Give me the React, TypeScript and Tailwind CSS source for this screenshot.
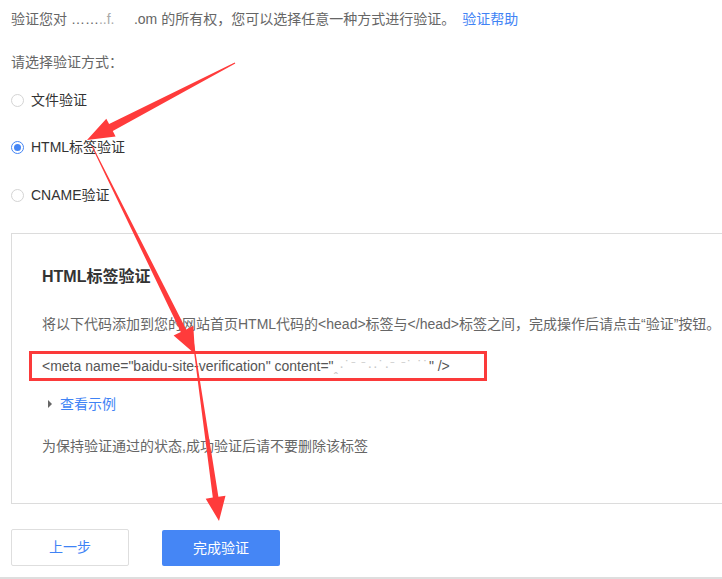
import React from "react";

type Pt = [number, number];

// tapered arrow polygon from tail to tip
function arrowPoints(tail: Pt, tip: Pt, headLen: number, headW: number, shaftW: number, tailW: number) {
  const dx = tip[0] - tail[0];
  const dy = tip[1] - tail[1];
  const len = Math.hypot(dx, dy);
  const ux = dx / len;
  const uy = dy / len;
  const nx = -uy;
  const ny = ux;
  const bx = tip[0] - ux * headLen;
  const by = tip[1] - uy * headLen;
  const p = (x: number, y: number) => `${x.toFixed(1)},${y.toFixed(1)}`;
  return [
    p(tail[0] + nx * tailW, tail[1] + ny * tailW),
    p(bx + nx * shaftW, by + ny * shaftW),
    p(bx + nx * headW, by + ny * headW),
    p(tip[0], tip[1]),
    p(bx - nx * headW, by - ny * headW),
    p(bx - nx * shaftW, by - ny * shaftW),
    p(tail[0] - nx * tailW, tail[1] - ny * tailW),
  ].join(" ");
}

function Radio({ checked, label }: { checked?: boolean; label: string }) {
  return (
    <div className="flex items-center h-[28px] gap-[7px]">
      <span
        className={`w-[13px] h-[13px] rounded-full border flex items-center justify-center bg-white ${
          checked ? "border-[#4586f5]" : "border-[#d4d4d4]"
        }`}
      >
        {checked && <span className="w-[7px] h-[7px] rounded-full bg-[#4586f5]" />}
      </span>
      <span className="text-[14px] text-[#333]">{label}</span>
    </div>
  );
}

export default function App() {
  return (
    <div
      className="relative w-[722px] h-[579px] overflow-hidden bg-white"
      style={{ fontFamily: '"Liberation Sans", "Noto Sans CJK SC", sans-serif' }}
    >
      <div className="flex flex-col">
        <div className="h-[38px] flex items-center pl-[11px] text-[14px] text-[#666] whitespace-nowrap">
          <span>
            验证您对 ……<span className="text-[#aaa]">..f.</span>&nbsp;&nbsp;&nbsp;&nbsp;&nbsp;.om 的所有权，您可以选择任意一种方式进行验证。
          </span>
          <a className="ml-[7px] text-[#3f83f5]">验证帮助</a>
        </div>
        <div className="h-[48px] flex items-center pl-[11px] text-[14px] text-[#666]">请选择验证方式：</div>

        <div className="pl-[11px] flex flex-col">
          <Radio label="文件验证" />
          <div className="mt-[19px]">
            <Radio checked label="HTML标签验证" />
          </div>
          <div className="mt-[20px]">
            <Radio label="CNAME验证" />
          </div>
        </div>

        <div className="mt-[24px] ml-[11px] w-[740px] border border-[#dcdcdc] pl-[30px] pt-[31px] pb-[47px]">
          <div className="h-[24px] flex items-center text-[16px] font-bold text-[#333]">HTML标签验证</div>
          <div className="mt-[25px] h-[20px] flex items-center text-[14px] text-[#666] whitespace-nowrap">
            将以下代码添加到您的网站首页HTML代码的&lt;head&gt;标签与&lt;/head&gt;标签之间，完成操作后请点击“验证”按钮。
          </div>
          <div className="mt-[17px] -ml-[13px] w-[458px] h-[30px] border-[3px] border-[#fb3a3a] flex items-center pl-[10px] text-[14px] text-[#555] whitespace-nowrap">
            &lt;meta name="baidu-site-verification" content="
            <span className="text-[#c8c8c8] tracking-[1px]">ꞈ·˙⁻ ⁻··˙·⁻ ⁻˙ ˙˙</span>" /&gt;
          </div>
          <div className="mt-[13px] h-[20px] flex items-center gap-[8px] pl-[6px]">
            <span className="w-0 h-0 border-y-[4px] border-y-transparent border-l-[4px] border-l-[#666]" />
            <a className="text-[14px] text-[#3f83f5]">查看示例</a>
          </div>
          <div className="mt-[22px] h-[20px] flex items-center text-[14px] text-[#666]">
            为保持验证通过的状态,成功验证后请不要删除该标签
          </div>
        </div>

        <div className="mt-[25px] pl-[11px] flex items-start gap-[33px]">
          <button className="w-[118px] h-[37px] border border-[#dedede] rounded-[2px] bg-white text-[14px] text-[#3f83f5]">
            上一步
          </button>
          <button className="mt-[1px] w-[118px] h-[36px] rounded-[2px] bg-[#4586f5] text-[14px] text-white">
            完成验证
          </button>
        </div>

        <div className="mt-[11px] h-[2px] bg-[#dedede]" />
      </div>

      <svg className="absolute inset-0 pointer-events-none" width="722" height="579" viewBox="0 0 722 579">
        <polygon points={arrowPoints([235, 63], [87, 140], 27, 10, 4, 0.6)} fill="#ff3b3b" />
        <polygon points={arrowPoints([92, 146], [195, 354], 26, 11, 3, 0.5)} fill="#ff3b3b" />
        <polygon points={arrowPoints([193, 340], [219, 521], 24, 10, 2.8, 0.5)} fill="#ff3b3b" />
      </svg>
    </div>
  );
}
